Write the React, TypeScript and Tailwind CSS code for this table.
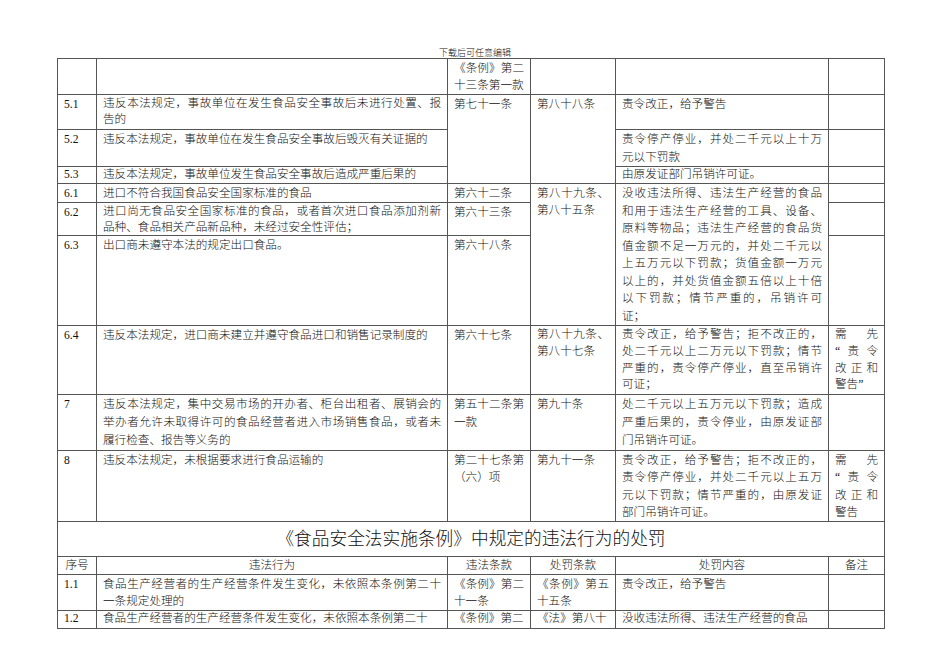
import React from 'react';

const CELL = 'border border-[#555] align-top px-[6px] pt-[1px] leading-[17px]';
const TIGHT = 'border border-[#555] align-top px-[6px] leading-[16px]';
const CENTER = 'border border-[#555] align-middle text-center px-[4px] leading-[16px]';

// one line of a justified paragraph; the last line stays left
function Lines({ lines, lh }: { lines: string[]; lh?: string }) {
  return (
    <>
      {lines.map((l, i) => (
        <div
          key={i}
          className={`${lh ?? ''} ${i < lines.length - 1 ? 'text-justify [text-align-last:justify]' : ''}`}
        >
          {l}
        </div>
      ))}
    </>
  );
}

export default function App() {
  return (
    <div className="w-[950px] h-[672px] bg-white text-[#111] font-['Liberation_Serif','Noto_Sans_CJK_SC',serif] text-[11.6px] font-light overflow-hidden">
      <div className="h-[58px] flex items-end justify-center">
        <span className="text-[9px] leading-[10px]">下载后可任意编辑</span>
      </div>

      <table className="ml-[57px] w-[827px] table-fixed border-collapse">
        <colgroup>
          <col className="w-[39px]" />
          <col className="w-[351px]" />
          <col className="w-[83px]" />
          <col className="w-[85px]" />
          <col className="w-[213px]" />
          <col className="w-[56px]" />
        </colgroup>
        <tbody>
          <tr className="h-[36px]">
            <td className={CELL}></td>
            <td className={CELL}></td>
            <td className={CELL}>
              <Lines lines={['《条例》第二', '十三条第一款']} />
            </td>
            <td className={CELL}></td>
            <td className={CELL}></td>
            <td className={CELL}></td>
          </tr>

          <tr className="h-[35px]">
            <td className={CELL}>5.1</td>
            <td className={CELL}>
              <Lines lh="leading-[15.5px]" lines={['违反本法规定，事故单位在发生食品安全事故后未进行处置、报', '告的']} />
            </td>
            <td className={CELL} rowSpan={3}>第七十一条</td>
            <td className={CELL} rowSpan={3}>第八十八条</td>
            <td className={CELL}>责令改正，给予警告</td>
            <td className={CELL}></td>
          </tr>
          <tr className="h-[37px]">
            <td className={CELL}>5.2</td>
            <td className={CELL}>违反本法规定，事故单位在发生食品安全事故后毁灭有关证据的</td>
            <td className={CELL}>
              <Lines lh="leading-[17.5px]" lines={['责令停产停业，并处二千元以上十万', '元以下罚款']} />
            </td>
            <td className={CELL}></td>
          </tr>
          <tr className="h-[17px]">
            <td className={TIGHT}>5.3</td>
            <td className={TIGHT}>违反本法规定，事故单位发生食品安全事故后造成严重后果的</td>
            <td className={TIGHT}>由原发证部门吊销许可证。</td>
            <td className={TIGHT}></td>
          </tr>

          <tr className="h-[19px]">
            <td className={CELL}>6.1</td>
            <td className={CELL}>进口不符合我国食品安全国家标准的食品</td>
            <td className={CELL}>第六十二条</td>
            <td className={CELL} rowSpan={3}>
              <Lines lines={['第八十九条、', '第八十五条']} />
            </td>
            <td className={CELL} rowSpan={3}>
              <Lines
                lh="leading-[17.5px]"
                lines={[
                  '没收违法所得、违法生产经营的食品',
                  '和用于违法生产经营的工具、设备、',
                  '原料等物品；违法生产经营的食品货',
                  '值金额不足一万元的，并处二千元以',
                  '上五万元以下罚款；货值金额一万元',
                  '以上的，并处货值金额五倍以上十倍',
                  '以下罚款；情节严重的，吊销许可',
                  '证；',
                ]}
              />
            </td>
            <td className={CELL}></td>
          </tr>
          <tr className="h-[33px]">
            <td className={CELL}>6.2</td>
            <td className={CELL}>
              <Lines lh="leading-[15.5px]" lines={['进口尚无食品安全国家标准的食品，或者首次进口食品添加剂新', '品种、食品相关产品新品种，未经过安全性评估；']} />
            </td>
            <td className={CELL}>第六十三条</td>
            <td className={CELL}></td>
          </tr>
          <tr className="h-[90px]">
            <td className={CELL}>6.3</td>
            <td className={CELL}>出口商未遵守本法的规定出口食品。</td>
            <td className={CELL}>第六十八条</td>
            <td className={CELL}></td>
          </tr>

          <tr className="h-[69px]">
            <td className={CELL}>6.4</td>
            <td className={CELL}>违反本法规定，进口商未建立并遵守食品进口和销售记录制度的</td>
            <td className={CELL}>第六十七条</td>
            <td className={CELL}>
              <Lines lh="leading-[16.75px]" lines={['第八十九条、', '第八十七条']} />
            </td>
            <td className={CELL}>
              <Lines
                lh="leading-[16.75px]"
                lines={[
                  '责令改正，给予警告；拒不改正的，',
                  '处二千元以上二万元以下罚款；情节',
                  '严重的，责令停产停业，直至吊销许',
                  '可证；',
                ]}
              />
            </td>
            <td className={CELL}>
              <Lines lh="leading-[16.75px]" lines={['需先', '“责令', '改正和', '警告”']} />
            </td>
          </tr>

          <tr className="h-[56px]">
            <td className={CELL}>7</td>
            <td className={CELL}>
              <Lines
                lh="leading-[18px]"
                lines={[
                  '违反本法规定，集中交易市场的开办者、柜台出租者、展销会的',
                  '举办者允许未取得许可的食品经营者进入市场销售食品，或者未',
                  '履行检查、报告等义务的',
                ]}
              />
            </td>
            <td className={CELL}>
              <Lines lh="leading-[18px]" lines={['第五十二条第', '一款']} />
            </td>
            <td className={CELL}>第九十条</td>
            <td className={CELL}>
              <Lines
                lh="leading-[18px]"
                lines={[
                  '处二千元以上五万元以下罚款；造成',
                  '严重后果的，责令停业，由原发证部',
                  '门吊销许可证。',
                ]}
              />
            </td>
            <td className={CELL}></td>
          </tr>

          <tr className="h-[71px]">
            <td className={CELL}>8</td>
            <td className={CELL}>违反本法规定，未根据要求进行食品运输的</td>
            <td className={CELL}>
              <Lines lh="leading-[17.25px]" lines={['第二十七条第', '（六）项']} />
            </td>
            <td className={CELL}>第九十一条</td>
            <td className={CELL}>
              <Lines
                lh="leading-[17.25px]"
                lines={[
                  '责令改正，给予警告；拒不改正的，',
                  '责令停产停业，并处二千元以上五万',
                  '元以下罚款；情节严重的，由原发证',
                  '部门吊销许可证。',
                ]}
              />
            </td>
            <td className={CELL}>
              <Lines lh="leading-[17.25px]" lines={['需先', '“责令', '改正和', '警告']} />
            </td>
          </tr>

          <tr className="h-[35px]">
            <td colSpan={6} className="border border-[#555] align-middle text-center text-[17.7px] leading-[22px]">
              《食品安全法实施条例》中规定的违法行为的处罚
            </td>
          </tr>

          <tr className="h-[18px]">
            <td className={CENTER}>序号</td>
            <td className={CENTER}>违法行为</td>
            <td className={CENTER}>违法条款</td>
            <td className={CENTER}>处罚条款</td>
            <td className={CENTER}>处罚内容</td>
            <td className={CENTER}>备注</td>
          </tr>

          <tr className="h-[36px]">
            <td className={CELL}>1.1</td>
            <td className={CELL}>
              <Lines lines={['食品生产经营者的生产经营条件发生变化，未依照本条例第二十', '一条规定处理的']} />
            </td>
            <td className={CELL}>
              <Lines lines={['《条例》第二', '十一条']} />
            </td>
            <td className={CELL}>
              <Lines lines={['《条例》第五', '十五条']} />
            </td>
            <td className={CELL}>责令改正，给予警告</td>
            <td className={CELL}></td>
          </tr>
          <tr className="h-[18px]">
            <td className={TIGHT}>1.2</td>
            <td className={TIGHT}>食品生产经营者的生产经营条件发生变化，未依照本条例第二十</td>
            <td className={TIGHT}>《条例》第二</td>
            <td className={TIGHT}>《法》第八十</td>
            <td className={TIGHT}>没收违法所得、违法生产经营的食品</td>
            <td className={TIGHT}></td>
          </tr>
        </tbody>
      </table>
    </div>
  );
}
